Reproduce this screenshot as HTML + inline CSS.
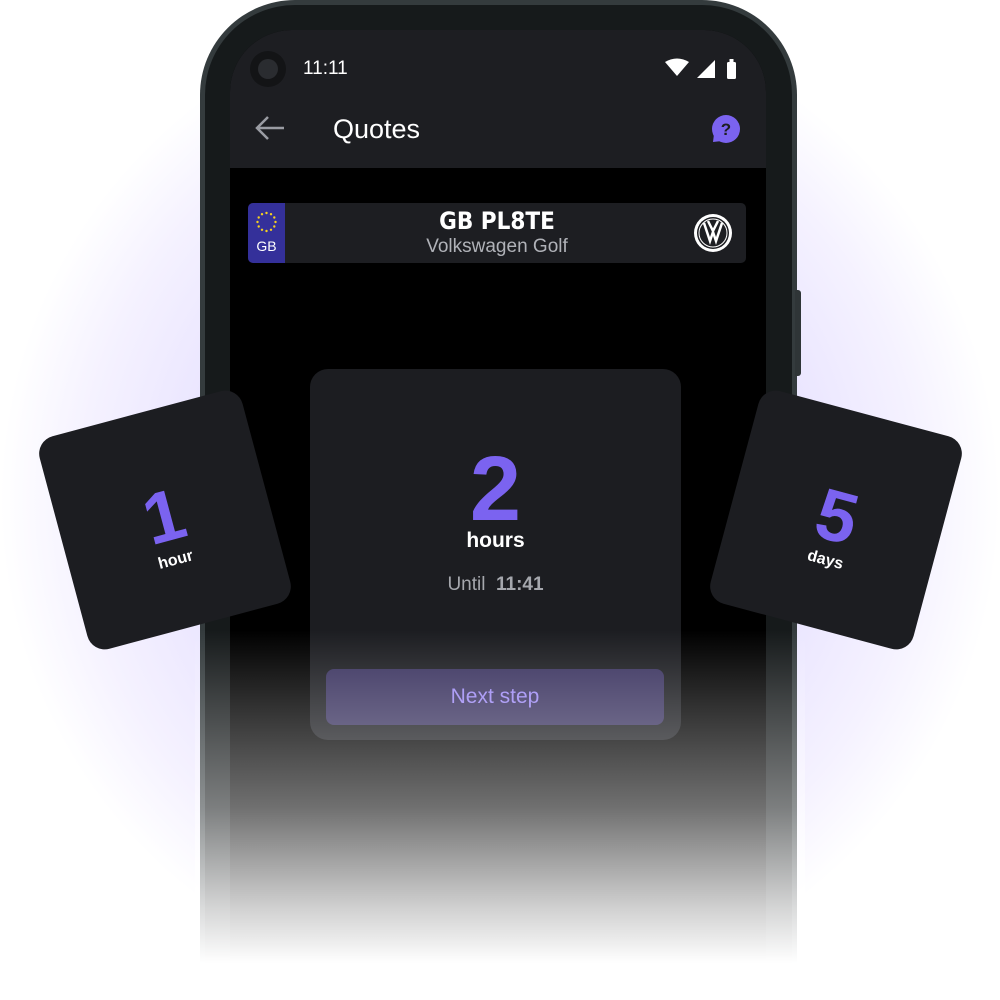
<!DOCTYPE html>
<html><head><style>
body{margin:0;width:1000px;height:1000px;position:relative;overflow:hidden;background:#fff;font-family:"Liberation Sans",sans-serif}
.glow{position:absolute;left:0;top:0;width:1000px;height:1000px;background:radial-gradient(circle at 500px 500px,#e4ddff 0px,#e9e4ff 300px,#f5f2ff 420px,#fff 500px)}
.phone{position:absolute;left:200px;top:0;width:597px;height:1000px;border-radius:95px 95px 0 0;background:#343b3d}
.body{position:absolute;left:205px;top:5px;width:587px;height:995px;border-radius:90px 90px 0 0;background:#161a1b}
.screen{position:absolute;left:230px;top:30px;width:536px;height:970px;border-radius:62px 62px 0 0;background:#000;overflow:hidden}
.hdr{position:absolute;left:0;top:0;width:536px;height:138px;background:#1d1e22}
.btn{position:absolute;left:795px;top:290px;width:6px;height:86px;background:#2f3537;border-radius:0 3px 3px 0}
.plate{position:absolute;left:18px;top:173px;width:498px;height:60px;background:#1d1e22;border-radius:5px;overflow:hidden}
.eu{position:absolute;left:0;top:0;width:37px;height:60px;background:#34309a;color:#fff;font-size:14px;text-align:center}
.card{position:absolute;background:#1c1d21;border-radius:18px}
.fade{position:absolute;left:195px;top:630px;width:610px;height:370px;background:linear-gradient(#fff0 0%,#ffffff30 20%,#ffffff70 48%,#ffffffd0 75%,#fff 90%,#fff 100%)}
</style></head><body>
<div class="glow"></div>
<div class="phone"></div><div class="body"></div><div class="btn"></div>
<div class="screen">
 <div class="hdr">
  <div style="position:absolute;left:20px;top:21px;width:36px;height:36px;border-radius:50%;background:#131416"></div>
  <div style="position:absolute;left:28px;top:29px;width:20px;height:20px;border-radius:50%;background:#2a2c30"></div>
  <div style="position:absolute;left:73px;top:28px;color:#fff;font-size:19px">11:11</div>
  <svg style="position:absolute;left:435px;top:28px" width="80" height="24"><path d="M0 4 Q12 -3 24 4 L12 18Z" fill="#fff"/><path d="M32 20 L50 2 L50 20Z" fill="#fff"/><rect x="62" y="4" width="9" height="17" rx="1.5" fill="#fff"/><rect x="64.5" y="1" width="4" height="4" fill="#fff"/></svg>
  <svg style="position:absolute;left:24px;top:85px" width="32" height="26"><path d="M30 13H3M14 2L3 13L14 24" stroke="#9a9ca3" stroke-width="2.5" fill="none"/></svg>
  <div style="position:absolute;left:103px;top:84px;color:#fff;font-size:27px">Quotes</div>
  <svg style="position:absolute;left:480px;top:84px" width="32" height="32"><circle cx="16" cy="15" r="14" fill="#7b63f0"/><path d="M4 20 L3 28 L12 27Z" fill="#7b63f0"/><text x="16" y="21" font-size="17" font-weight="bold" fill="#1d1e22" text-anchor="middle" font-family="Liberation Sans">?</text></svg>
 </div>
 <div class="plate">
  <div class="eu"><svg width="37" height="36"><g fill="#f5d020"><circle cx="18.5" cy="10" r="1.2"/><circle cx="23" cy="11.2" r="1.2"/><circle cx="26.3" cy="14.5" r="1.2"/><circle cx="27.5" cy="19" r="1.2"/><circle cx="26.3" cy="23.5" r="1.2"/><circle cx="23" cy="26.8" r="1.2"/><circle cx="18.5" cy="28" r="1.2"/><circle cx="14" cy="26.8" r="1.2"/><circle cx="10.7" cy="23.5" r="1.2"/><circle cx="9.5" cy="19" r="1.2"/><circle cx="10.7" cy="14.5" r="1.2"/><circle cx="14" cy="11.2" r="1.2"/></g></svg><div style="margin-top:-4px">GB</div></div>
  <div style="position:absolute;left:0;width:498px;top:4px;text-align:center;color:#fff;font-size:24px;font-weight:bold;letter-spacing:0px;font-family:'DejaVu Sans Condensed','Liberation Sans',sans-serif">GB PL8TE</div>
  <div style="position:absolute;left:0;width:498px;top:33px;text-align:center;color:#b0b2b8;font-size:19px">Volkswagen Golf</div>
  <svg style="position:absolute;left:444px;top:9px" width="42" height="42"><circle cx="21" cy="21" r="19" fill="#fff"/><circle cx="21" cy="21" r="16" fill="#1d1e22"/><circle cx="21" cy="21" r="14" fill="none" stroke="#fff" stroke-width="1"/><path d="M12 11 L18 29 L21 20 L24 29 L30 11 M16 9 L21 19 L26 9" stroke="#fff" stroke-width="2.5" fill="none"/></svg>
 </div>
</div>
<div class="card" style="left:310px;top:369px;width:371px;height:371px">
 <div style="position:absolute;left:0;width:371px;top:68px;text-align:center;color:#7b63f0;font-size:92px;font-weight:bold">2</div>
 <div style="position:absolute;left:0;width:371px;top:160px;text-align:center;color:#fff;font-size:21px;font-weight:bold">hours</div>
 <div style="position:absolute;left:0;width:371px;top:205px;text-align:center;color:#a5a7ad;font-size:19px">Until&nbsp; <b>11:41</b></div>
 <div style="position:absolute;left:16px;top:300px;width:338px;height:56px;border-radius:8px;background:#3b3460;color:#9f8cf5;font-size:21px;text-align:center;line-height:56px">Next step</div>
</div>
<div class="card" style="left:60px;top:410px;width:210px;height:220px;transform:rotate(-15deg)">
 <div style="position:absolute;left:0;width:210px;top:66px;text-align:center;color:#7b63f0;font-size:72px;font-weight:bold">1</div>
 <div style="position:absolute;left:0;width:210px;top:143px;text-align:center;color:#fff;font-size:16px;font-weight:bold">hour</div>
</div>
<div class="card" style="left:731px;top:410px;width:210px;height:220px;transform:rotate(15deg)">
 <div style="position:absolute;left:0;width:210px;top:66px;text-align:center;color:#7b63f0;font-size:72px;font-weight:bold">5</div>
 <div style="position:absolute;left:0;width:210px;top:143px;text-align:center;color:#fff;font-size:16px;font-weight:bold">days</div>
</div>
<div class="fade"></div>
</body></html>
